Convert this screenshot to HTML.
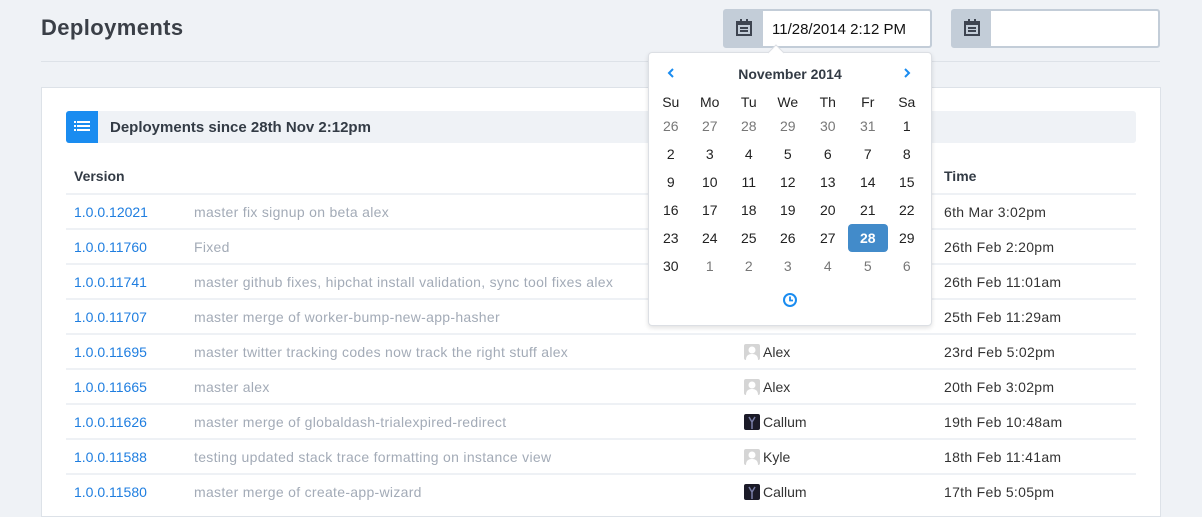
<!DOCTYPE html>
<html><head><style>
*{box-sizing:border-box;margin:0;padding:0}
body{width:1202px;height:507px;overflow:hidden;background:#eff2f6;font-family:"Liberation Sans",sans-serif;color:#333;position:relative}
.abs{position:absolute}
h1{position:absolute;left:41px;top:15px;font-size:22px;font-weight:bold;color:#3a3f47;letter-spacing:0.4px}
.hr{left:41px;top:61px;width:1119px;height:1px;background:#dde2e8}
.grp{top:9px;height:39px;border:2px solid #c3cdd8;border-radius:3px;background:#fff}
.grp .ad{position:absolute;left:0;top:0;width:38px;height:35px;background:#c3cdd8}
.grp .tx{position:absolute;left:47px;top:10px;font-size:15px;color:#111}
.panel{left:41px;top:87px;width:1120px;height:430px;background:#fff;border:1px solid #dde2e8}
.bar{left:66px;top:111px;width:1070px;height:32px;background:#eff2f6;border-radius:3px}
.bar .ic{position:absolute;left:0;top:0;width:32px;height:32px;background:#1a8cf0;border-radius:3px 0 0 3px}
.bar .t{position:absolute;left:44px;top:8px;font-size:15px;font-weight:bold;color:#333b45}
.th{top:168px;font-size:14px;font-weight:bold;color:#333b45}
.line{left:66px;width:1070px;height:2px;background:#eef1f5}
.v{left:74px;font-size:14px;color:#1f7ee0}
.m{left:194px;font-size:14px;color:#a3abb7;letter-spacing:0.3px}
.u{left:744px;font-size:14px;color:#333}
.tm{left:944px;font-size:14px;color:#333;letter-spacing:0.3px}
.av{display:inline-block;width:16px;height:16px;vertical-align:-3px;margin-right:3px;border-radius:2px;overflow:hidden}
.g{background:#d5d5d5}
.d{background:#1b1b28}
.pop{left:648px;top:52px;width:284px;height:274px;background:#fff;border:1px solid #dcdfe4;border-radius:4px;box-shadow:0 2px 5px rgba(0,0,0,.12)}
.cal{position:absolute;left:651px;top:0;width:276px}
.c{position:absolute;width:39.5px;text-align:center;font-size:14px;color:#222}
.o{color:#777}
</style></head><body>
<h1>Deployments</h1>
<div class="abs hr"></div>
<div class="abs grp" style="left:723px;width:209px"><div class="ad"><svg width="38" height="35"><rect x="12" y="11" width="14" height="13" fill="none" stroke="#3d4450" stroke-width="2"/><rect x="12" y="11" width="14" height="3" fill="#3d4450"/><rect x="15" y="8" width="2" height="4" fill="#3d4450"/><rect x="21" y="8" width="2" height="4" fill="#3d4450"/><rect x="15" y="16" width="8" height="2" fill="#3d4450"/><rect x="15" y="19" width="8" height="2" fill="#3d4450"/></svg></div><div class="tx">11/28/2014 2:12 PM</div></div>
<div class="abs grp" style="left:951px;width:209px"><div class="ad"><svg width="38" height="35"><rect x="12" y="11" width="14" height="13" fill="none" stroke="#3d4450" stroke-width="2"/><rect x="12" y="11" width="14" height="3" fill="#3d4450"/><rect x="15" y="8" width="2" height="4" fill="#3d4450"/><rect x="21" y="8" width="2" height="4" fill="#3d4450"/><rect x="15" y="16" width="8" height="2" fill="#3d4450"/><rect x="15" y="19" width="8" height="2" fill="#3d4450"/></svg></div></div>
<div class="abs panel"></div>
<div class="abs bar"><div class="ic"><svg width="32" height="32"><g fill="#fff"><rect x="8" y="10" width="2" height="2"/><rect x="11" y="10" width="13" height="2"/><rect x="8" y="14" width="2" height="2"/><rect x="11" y="14" width="13" height="2"/><rect x="8" y="18" width="2" height="2"/><rect x="11" y="18" width="13" height="2"/></g></svg></div><div class="t">Deployments since 28th Nov 2:12pm</div></div>
<div class="abs th" style="left:74px">Version</div>
<div class="abs th" style="left:944px">Time</div>
<div class="abs line" style="top:193px"></div>
<div class="abs v" style="top:204px">1.0.0.12021</div><div class="abs m" style="top:204px">master fix signup on beta alex</div><div class="abs tm" style="top:204px">6th Mar 3:02pm</div><div class="abs line" style="top:228px"></div>
<div class="abs v" style="top:239px">1.0.0.11760</div><div class="abs m" style="top:239px">Fixed</div><div class="abs tm" style="top:239px">26th Feb 2:20pm</div><div class="abs line" style="top:263px"></div>
<div class="abs v" style="top:274px">1.0.0.11741</div><div class="abs m" style="top:274px">master github fixes, hipchat install validation, sync tool fixes alex</div><div class="abs tm" style="top:274px">26th Feb 11:01am</div><div class="abs line" style="top:298px"></div>
<div class="abs v" style="top:309px">1.0.0.11707</div><div class="abs m" style="top:309px">master merge of worker-bump-new-app-hasher</div><div class="abs tm" style="top:309px">25th Feb 11:29am</div><div class="abs line" style="top:333px"></div>
<div class="abs v" style="top:344px">1.0.0.11695</div><div class="abs m" style="top:344px">master twitter tracking codes now track the right stuff alex</div><div class="abs u" style="top:344px"><span class="av g"><svg width="16" height="16"><circle cx="8" cy="6" r="3.5" fill="#fff"/><path d="M2 16 Q2 10 8 10 Q14 10 14 16Z" fill="#fff"/></svg></span>Alex</div><div class="abs tm" style="top:344px">23rd Feb 5:02pm</div><div class="abs line" style="top:368px"></div>
<div class="abs v" style="top:379px">1.0.0.11665</div><div class="abs m" style="top:379px">master alex</div><div class="abs u" style="top:379px"><span class="av g"><svg width="16" height="16"><circle cx="8" cy="6" r="3.5" fill="#fff"/><path d="M2 16 Q2 10 8 10 Q14 10 14 16Z" fill="#fff"/></svg></span>Alex</div><div class="abs tm" style="top:379px">20th Feb 3:02pm</div><div class="abs line" style="top:403px"></div>
<div class="abs v" style="top:414px">1.0.0.11626</div><div class="abs m" style="top:414px">master merge of globaldash-trialexpired-redirect</div><div class="abs u" style="top:414px"><span class="av d"><svg width="16" height="16"><path d="M5 3 L8 8 L11 3 M8 8 V15" stroke="#7a7fa8" stroke-width="1.5" fill="none"/></svg></span>Callum</div><div class="abs tm" style="top:414px">19th Feb 10:48am</div><div class="abs line" style="top:438px"></div>
<div class="abs v" style="top:449px">1.0.0.11588</div><div class="abs m" style="top:449px">testing updated stack trace formatting on instance view</div><div class="abs u" style="top:449px"><span class="av g"><svg width="16" height="16"><circle cx="8" cy="6" r="3.5" fill="#fff"/><path d="M2 16 Q2 10 8 10 Q14 10 14 16Z" fill="#fff"/></svg></span>Kyle</div><div class="abs tm" style="top:449px">18th Feb 11:41am</div><div class="abs line" style="top:473px"></div>
<div class="abs v" style="top:484px">1.0.0.11580</div><div class="abs m" style="top:484px">master merge of create-app-wizard</div><div class="abs u" style="top:484px"><span class="av d"><svg width="16" height="16"><path d="M5 3 L8 8 L11 3 M8 8 V15" stroke="#7a7fa8" stroke-width="1.5" fill="none"/></svg></span>Callum</div><div class="abs tm" style="top:484px">17th Feb 5:05pm</div>
<div class="abs pop"></div>
<svg class="abs" style="left:768px;top:44px" width="16" height="10"><path d="M0 9 L8 1 L16 9" fill="#fff" stroke="#dcdfe4"/></svg>
<div class="abs" style="left:648px;top:66px;width:284px;text-align:center;font-size:14px;font-weight:bold;color:#333b45">November 2014</div>
<svg class="abs" style="left:666px;top:67px" width="10" height="12"><path d="M7 2 L3 6 L7 10" fill="none" stroke="#1a8cf0" stroke-width="2"/></svg>
<svg class="abs" style="left:902px;top:67px" width="10" height="12"><path d="M3 2 L7 6 L3 10" fill="none" stroke="#1a8cf0" stroke-width="2"/></svg>
<div class="abs" style="left:848px;top:224px;width:40px;height:28px;background:#428bca;border-radius:4px"></div>
<div class="cal">
<div class="c" style="left:0;top:94px">Su</div><div class="c" style="left:39px;top:94px">Mo</div><div class="c" style="left:78px;top:94px">Tu</div><div class="c" style="left:117px;top:94px">We</div><div class="c" style="left:157px;top:94px">Th</div><div class="c" style="left:197px;top:94px">Fr</div><div class="c" style="left:236px;top:94px">Sa</div>
<div class="c o" style="left:0;top:118px">26</div><div class="c o" style="left:39px;top:118px">27</div><div class="c o" style="left:78px;top:118px">28</div><div class="c o" style="left:117px;top:118px">29</div><div class="c o" style="left:157px;top:118px">30</div><div class="c o" style="left:197px;top:118px">31</div><div class="c" style="left:236px;top:118px">1</div>
<div class="c" style="left:0;top:146px">2</div><div class="c" style="left:39px;top:146px">3</div><div class="c" style="left:78px;top:146px">4</div><div class="c" style="left:117px;top:146px">5</div><div class="c" style="left:157px;top:146px">6</div><div class="c" style="left:197px;top:146px">7</div><div class="c" style="left:236px;top:146px">8</div>
<div class="c" style="left:0;top:174px">9</div><div class="c" style="left:39px;top:174px">10</div><div class="c" style="left:78px;top:174px">11</div><div class="c" style="left:117px;top:174px">12</div><div class="c" style="left:157px;top:174px">13</div><div class="c" style="left:197px;top:174px">14</div><div class="c" style="left:236px;top:174px">15</div>
<div class="c" style="left:0;top:202px">16</div><div class="c" style="left:39px;top:202px">17</div><div class="c" style="left:78px;top:202px">18</div><div class="c" style="left:117px;top:202px">19</div><div class="c" style="left:157px;top:202px">20</div><div class="c" style="left:197px;top:202px">21</div><div class="c" style="left:236px;top:202px">22</div>
<div class="c" style="left:0;top:230px">23</div><div class="c" style="left:39px;top:230px">24</div><div class="c" style="left:78px;top:230px">25</div><div class="c" style="left:117px;top:230px">26</div><div class="c" style="left:157px;top:230px">27</div><div class="c" style="left:197px;top:230px;color:#fff;font-weight:bold">28</div><div class="c" style="left:236px;top:230px">29</div>
<div class="c" style="left:0;top:258px">30</div><div class="c o" style="left:39px;top:258px">1</div><div class="c o" style="left:78px;top:258px">2</div><div class="c o" style="left:117px;top:258px">3</div><div class="c o" style="left:157px;top:258px">4</div><div class="c o" style="left:197px;top:258px">5</div><div class="c o" style="left:236px;top:258px">6</div>
</div>
<svg class="abs" style="left:782px;top:292px" width="16" height="16"><circle cx="8" cy="8" r="6" fill="none" stroke="#1a8cf0" stroke-width="2"/><path d="M8 4.5 V8.5 H11" fill="none" stroke="#1a8cf0" stroke-width="1.8"/></svg>
</body></html>
